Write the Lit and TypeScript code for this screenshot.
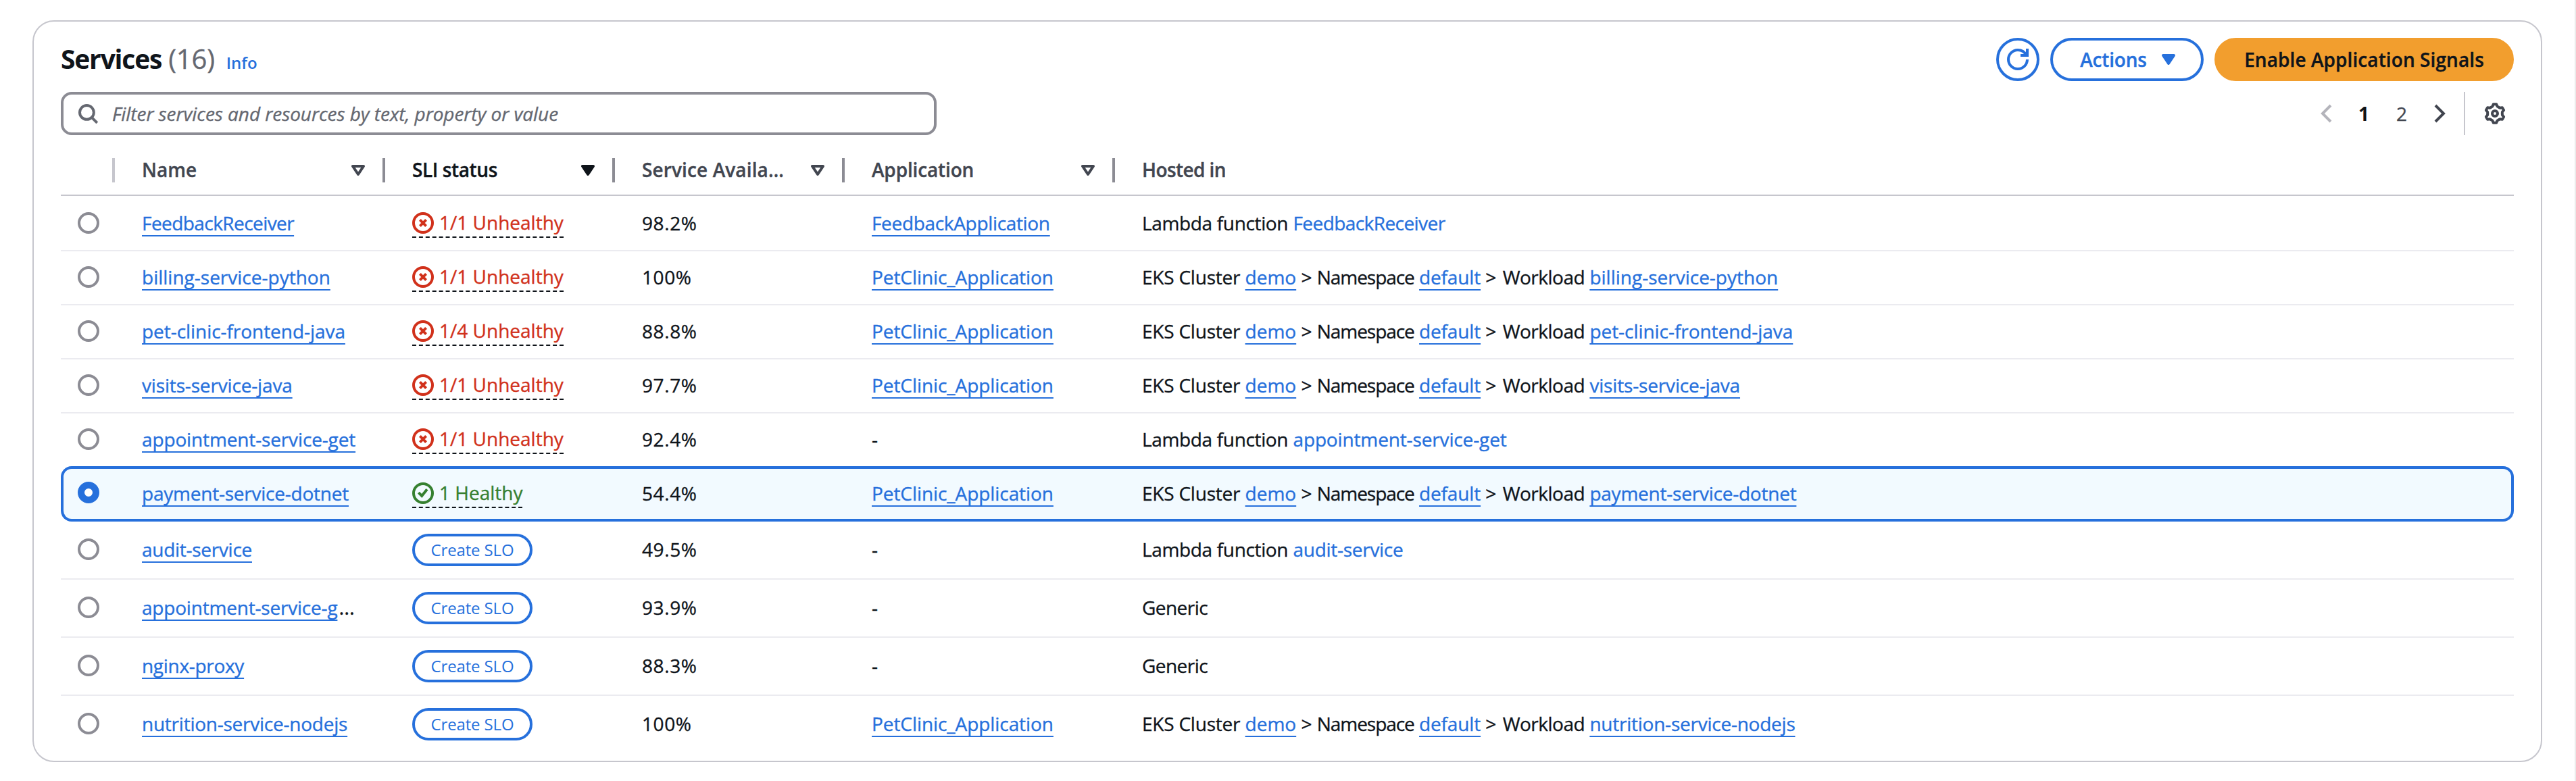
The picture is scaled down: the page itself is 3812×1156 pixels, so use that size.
import { LitElement, html, css, svg, nothing } from "lit";
import { classMap } from "lit/directives/class-map.js";

type Status = { kind: "bad" | "ok"; text: string } | null;
interface Service {
  name: string;
  truncated?: boolean;
  status: Status;
  availability: string;
  application?: string;
  lambda?: string;
  workload?: string;
  selected?: boolean;
}

const bad = (text: string): Status => ({ kind: "bad", text });

const SERVICES: Service[] = [
  { name: "FeedbackReceiver", status: bad("1/1 Unhealthy"), availability: "98.2%", application: "FeedbackApplication", lambda: "FeedbackReceiver" },
  { name: "billing-service-python", status: bad("1/1 Unhealthy"), availability: "100%", application: "PetClinic_Application", workload: "billing-service-python" },
  { name: "pet-clinic-frontend-java", status: bad("1/4 Unhealthy"), availability: "88.8%", application: "PetClinic_Application", workload: "pet-clinic-frontend-java" },
  { name: "visits-service-java", status: bad("1/1 Unhealthy"), availability: "97.7%", application: "PetClinic_Application", workload: "visits-service-java" },
  { name: "appointment-service-get", status: bad("1/1 Unhealthy"), availability: "92.4%", lambda: "appointment-service-get" },
  { name: "payment-service-dotnet", status: { kind: "ok", text: "1 Healthy" }, availability: "54.4%", application: "PetClinic_Application", workload: "payment-service-dotnet", selected: true },
  { name: "audit-service", status: null, availability: "49.5%", lambda: "audit-service" },
  { name: "appointment-service-g", truncated: true, status: null, availability: "93.9%" },
  { name: "nginx-proxy", status: null, availability: "88.3%" },
  { name: "nutrition-service-nodejs", status: null, availability: "100%", application: "PetClinic_Application", workload: "nutrition-service-nodejs" },
];

/* Letter spacing, in px, per word. */
const TRACKING: Record<string, number> = {
  FeedbackReceiver: -0.57,
  FeedbackApplication: -0.33,
  PetClinic_Application: -0.07,
  "pet-clinic-frontend-java": -0.05,
  "visits-service-java": -0.16,
  "appointment-service-get": -0.14,
  "appointment-service-g": -0.2,
  "payment-service-dotnet": -0.23,
  "audit-service": -0.28,
  "nginx-proxy": -0.3,
  "nutrition-service-nodejs": -0.24,
  "Lambda function": -0.35,
  "EKS Cluster": -0.22,
  Generic: -0.55,
  Namespace: -1.05,
  Workload: -0.5,
  default: -0.15,
  "Hosted in": -0.6,
  Application: -0.15,
  "SLI status": -0.4,
  "Service Availa…": 0.12,
};

const word = (text: string, cls = "") =>
  html`<span class=${cls} style="letter-spacing:${TRACKING[text] ?? 0}px">${text}</span>`;

const icon = (body: unknown, cls = "") =>
  html`<svg class="icon ${cls}" viewBox="0 0 16 16" fill="none" stroke="currentColor" stroke-width="2">${body}</svg>`;

const gearPath = (() => {
  const pt = (r: number, deg: number) => {
    const a = (deg * Math.PI) / 180;
    return `${(8 + r * Math.cos(a)).toFixed(2)} ${(8 + r * Math.sin(a)).toFixed(2)}`;
  };
  const pts: string[] = [];
  for (let t = -90; t < 270; t += 60) {
    pts.push(pt(7, t - 9), pt(7, t + 9), pt(5.6, t + 18), pt(5.4, t + 30), pt(5.6, t + 42));
  }
  return `M${pts.join("L")}Z`;
})();

const ICONS = {
  search: svg`<circle cx="7.2" cy="7.2" r="5.2"/><path d="m10.9 10.9 4 4"/>`,
  refresh: svg`<path d="M15 8c0 3.87-3.13 7-7 7s-7-3.13-7-7 3.13-7 7-7c2.79 0 5.2 1.63 6.33 4"/><path d="M10 5h5V0"/>`,
  caret: svg`<path stroke-linejoin="round" d="M4 5h8l-4 6-4-6Z"/>`,
  left: svg`<path d="M11 2 5 8l6 6"/>`,
  right: svg`<path d="m5 2 6 6-6 6"/>`,
  gear: svg`<circle cx="8" cy="8" r="2"/><path stroke-linejoin="round" d=${gearPath}/>`,
  bad: svg`<circle cx="8" cy="8" r="7"/><path d="m10.3 5.7-4.6 4.6M10.3 10.3 5.7 5.7"/>`,
  ok: svg`<circle cx="8" cy="8" r="7"/><path d="m4.7 7.6 2.4 2.4 3.9-4.9"/>`,
};

class AppRoot extends LitElement {
  static styles = css`
    :host {
      display: block;
      box-sizing: border-box;
      height: 1156px;
      padding: 30px 48px 28px;
      border-right: 2px solid #ebebeb;
      background: #fff;
      color: #0f141a;
      font: 400 28px/40px "Open Sans", "Noto Sans", sans-serif;
      -webkit-text-stroke: 0.35px currentColor;
      white-space: nowrap;
    }
    * { box-sizing: border-box; }
    .card {
      width: 3714px;
      height: 1098px;
      border: 2px solid #c6c6cd;
      border-radius: 32px;
      padding: 24px 40px 0;
    }
    .icon { width: 32px; height: 32px; flex: none; display: block; }
    .filled path { fill: currentColor; }
    .top { display: flex; align-items: center; justify-content: space-between; height: 64px; }
    .title { display: flex; align-items: baseline; }
    .title h2 { margin: 0; font-size: 39px; line-height: 48px; font-weight: 700; letter-spacing: -1.2px; -webkit-text-stroke: 0; }
    .count { font-size: 40px; color: #656871; margin-left: 10px; letter-spacing: -0.2px; }
    .info { font-size: 24px; font-weight: 600; color: #2670dc; margin-left: 17px; -webkit-text-stroke: 0; }
    .actions { display: flex; gap: 16px; }
    .btn {
      display: flex;
      align-items: center;
      justify-content: center;
      height: 64px;
      border: 4px solid #2670dc;
      border-radius: 32px;
      color: #2670dc;
      font-weight: 600;
      padding: 0 32px 0 40px;
    }
    .round { width: 64px; padding: 0; }
    .menu { width: 227px; gap: 16px; letter-spacing: -0.2px; }
    .primary { width: 443px; padding: 0; background: #f29e2e; border-color: #f29e2e; color: #0f141a; letter-spacing: 0.08px; }
    .tools { display: flex; justify-content: space-between; margin-top: 16px; height: 64px; }
    .search {
      display: flex;
      align-items: center;
      gap: 20px;
      width: 1296px;
      border: 4px solid #8c8c94;
      border-radius: 16px;
      padding-left: 20px;
      color: #656871;
    }
    .search em { letter-spacing: -0.06px; }
    .pager { display: flex; align-items: center; color: #424650; }
    .pager .off { color: #b4b4bb; }
    .page { width: 56px; text-align: center; }
    .current { color: #0f141a; font-weight: 700; margin-left: 11px; -webkit-text-stroke: 0; }
    .last { margin-right: 12px; }
    .rule { width: 2px; height: 64px; background: #c6c6cd; margin: 0 28px 0 20px; }
    .gear { margin-right: 12px; }
    .row {
      display: grid;
      grid-template-columns: 80px 400px 340px 340px 400px 1fr;
      width: 3630px;
      height: 80px;
      padding-top: 18px;
      border-bottom: 2px solid #ebebf0;
    }
    .first { height: 82px; padding-top: 20px; }
    .before { height: 78px; border-bottom: 0; }
    .selected {
      height: 82px;
      padding-top: 20px;
      border: 0;
      border-radius: 16px;
      background: #f2faff;
      box-shadow: inset 0 0 0 4px #2670dc;
    }
    .tall { height: 86px; padding-top: 21px; }
    .end { border-bottom: 0; }
    .head { height: 90px; padding-top: 31px; border-color: #c6c6cd; font-weight: 600; color: #424650; }
    .cell { padding-left: 40px; height: 40px; }
    .head .cell {
      display: flex;
      justify-content: space-between;
      padding-right: 20px;
      height: 36px;
      margin-top: 3px;
      border-right: 4px solid #8c8c94;
      line-height: 34px;
    }
    .head .cell .icon { margin-top: 2px; }
    .head .cell.lead { border-color: #c6c6cd; padding: 0; }
    .head .cell.tail { border: 0; }
    .head .sorted { color: #0f141a; }
    .radio {
      width: 32px;
      height: 32px;
      margin: 4px 0 0 25px;
      border: 4px solid #8c8c94;
      border-radius: 50%;
      background: #fff;
    }
    .selected .radio { margin-top: 3px; border: 10px solid #2670dc; }
    .link, .plain { color: #2670dc; }
    .link {
      text-decoration: underline;
      text-decoration-thickness: 2px;
      text-underline-offset: 7px;
      text-decoration-skip-ink: none;
    }
    .dots { font-size: 30px; line-height: 30px; margin-left: 2px; }
    .sep { letter-spacing: 1px; }
    .status { display: inline-flex; gap: 8px; height: 42px; border-bottom: 2px dashed #0f141a; }
    .status .icon { margin-top: 4px; }
    .status span { line-height: 38px; }
    .bad { color: #d1311b; }
    .ok { color: #368030; }
    .slo {
      display: flex;
      align-items: center;
      justify-content: center;
      width: 178px;
      height: 48px;
      margin-top: -3px;
      border: 4px solid #2670dc;
      border-radius: 24px;
      color: #2670dc;
      font-size: 24px;
      letter-spacing: -0.15px;
      -webkit-text-stroke: 0;
    }
    .pct { letter-spacing: 0.6px; }
  `;

  private hosted(s: Service) {
    if (s.lambda) return html`${word("Lambda function")} ${word(s.lambda, "plain")}`;
    if (!s.workload) return word("Generic");
    return html`${word("EKS Cluster")} ${word("demo", "link")} &gt; ${word("Namespace")} ${word("default", "link")} <span class="sep">&gt; </span>${word("Workload")} ${word(s.workload, "link")}`;
  }

  private row(s: Service, i: number) {
    const cls = {
      row: true,
      first: i === 0,
      before: !!SERVICES[i + 1]?.selected,
      selected: !!s.selected,
      tall: !s.status,
      end: i === SERVICES.length - 1,
    };
    return html`<div class=${classMap(cls)}>
      <div class="radio"></div>
      <div class="cell">${word(s.name, "link")}${s.truncated ? html`<span class="dots">…</span>` : nothing}</div>
      <div class="cell">
        ${s.status
          ? html`<div class="status">${icon(ICONS[s.status.kind], s.status.kind)}<span class=${s.status.kind}>${s.status.text}</span></div>`
          : html`<div class="slo">Create SLO</div>`}
      </div>
      <div class="cell pct">${s.availability}</div>
      <div class="cell">${s.application ? word(s.application, "link") : "-"}</div>
      <div class="cell">${this.hosted(s)}</div>
    </div>`;
  }

  render() {
    return html`<div class="card">
      <div class="top">
        <div class="title"><h2>Services</h2><span class="count">(16)</span><span class="info">Info</span></div>
        <div class="actions">
          <div class="btn round">${icon(ICONS.refresh)}</div>
          <div class="btn menu">Actions${icon(ICONS.caret, "filled")}</div>
          <div class="btn primary">Enable Application Signals</div>
        </div>
      </div>
      <div class="tools">
        <div class="search">${icon(ICONS.search)}<em>Filter services and resources by text, property or value</em></div>
        <div class="pager">
          ${icon(ICONS.left, "off")}<span class="page current">1</span><span class="page last">2</span>${icon(ICONS.right)}
          <span class="rule"></span>${icon(ICONS.gear, "gear")}
        </div>
      </div>
      <div class="row head">
        <div class="cell lead"></div>
        <div class="cell">${word("Name")}${icon(ICONS.caret)}</div>
        <div class="cell sorted">${word("SLI status")}${icon(ICONS.caret, "filled")}</div>
        <div class="cell">${word("Service Availa…")}${icon(ICONS.caret)}</div>
        <div class="cell">${word("Application")}${icon(ICONS.caret)}</div>
        <div class="cell tail">${word("Hosted in")}</div>
      </div>
      ${SERVICES.map((s, i) => this.row(s, i))}
    </div>`;
  }
}
customElements.define("app-root", AppRoot);
